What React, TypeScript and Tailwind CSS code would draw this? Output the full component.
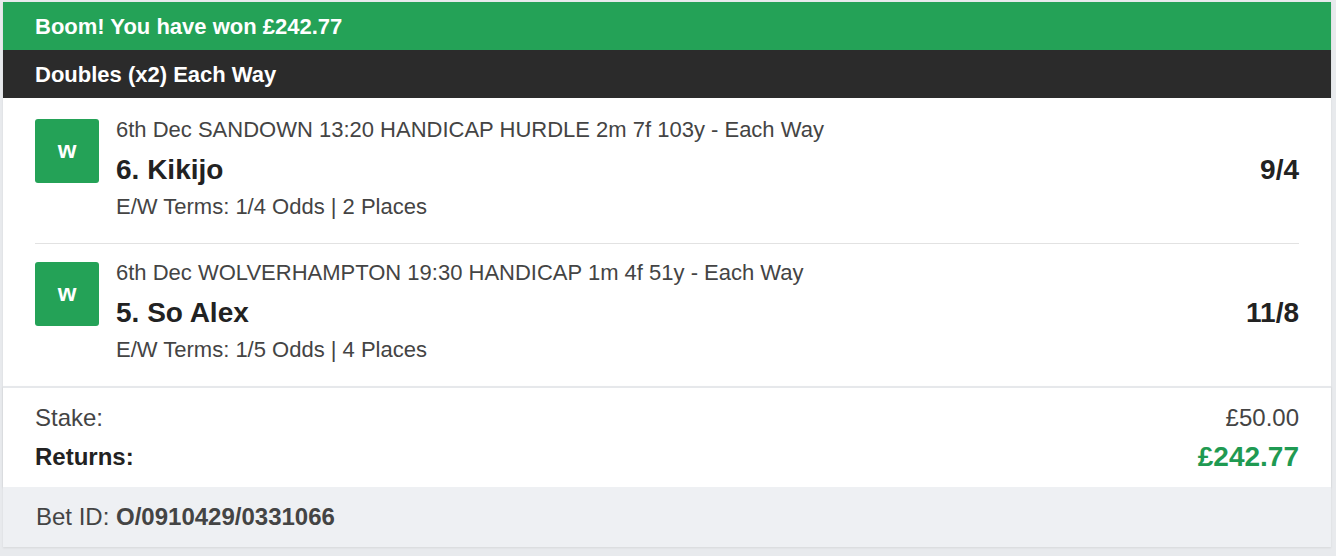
export default function App() {
  const legs = [
    {
      desc: "6th Dec SANDOWN 13:20 HANDICAP HURDLE 2m 7f 103y - Each Way",
      name: "6. Kikijo",
      terms: "E/W Terms: 1/4 Odds | 2 Places",
      odds: "9/4",
    },
    {
      desc: "6th Dec WOLVERHAMPTON 19:30 HANDICAP 1m 4f 51y - Each Way",
      name: "5. So Alex",
      terms: "E/W Terms: 1/5 Odds | 4 Places",
      odds: "11/8",
    },
  ];

  return (
    <div className="min-h-[556px] bg-[#e8eaed] pl-[3px] pr-[5px] pt-[2px] pb-[8px] font-['Liberation_Sans',Arial,sans-serif]">
      <div className="bg-white shadow-[0_1px_2px_rgba(0,0,0,0.08)]">
        <div className="flex h-[48px] items-center bg-[#24a257] px-[32px] text-[22px] font-bold text-white">
          Boom! You have won £242.77
        </div>
        <div className="flex h-[48px] items-center bg-[#2b2b2b] px-[32px] text-[22px] font-bold text-white">
          Doubles (x2) Each Way
        </div>

        <div className="px-[32px]">
          {legs.map((leg, i) => (
            <div
              key={leg.name}
              className={
                i === 0
                  ? "flex border-b border-[#e2e2e2] pt-[21px] pb-[24px]"
                  : "flex pt-[18px] pb-[24px]"
              }
            >
              <div className="flex h-[64px] w-[64px] shrink-0 items-center justify-center rounded-[3px] bg-[#24a257] pb-[2px] text-[24px] font-bold text-white">
                w
              </div>
              <div className="ml-[17px] flex-1">
                <div className="text-[22px] leading-[22px] text-[#444]">{leg.desc}</div>
                <div className="mt-[14px] flex items-center justify-between">
                  <span className="text-[28px] font-bold leading-[30px] text-[#222]">{leg.name}</span>
                  <span className="text-[28px] font-bold leading-[30px] text-[#222]">{leg.odds}</span>
                </div>
                <div className="mt-[10px] text-[22px] leading-[24px] text-[#444]">{leg.terms}</div>
              </div>
            </div>
          ))}
        </div>

        <div className="border-t-2 border-[#e6e8eb] px-[32px] pt-[17px] pb-[16px] shadow-[0_1px_2px_rgba(0,0,0,0.1)]">
          <div className="flex items-center justify-between text-[24px] leading-[26px] text-[#444]">
            <span>Stake:</span>
            <span>£50.00</span>
          </div>
          <div className="mt-[12px] flex items-center justify-between">
            <span className="text-[24px] font-bold leading-[28px] text-[#222]">Returns:</span>
            <span className="text-[28px] font-bold leading-[28px] text-[#1f9a52]">£242.77</span>
          </div>
        </div>

        <div className="flex h-[60px] items-center bg-[#eef0f3] px-[33px] text-[24px] text-[#444]">
          <span>Bet ID:&nbsp;</span>
          <span className="font-bold">O/0910429/0331066</span>
        </div>
      </div>
    </div>
  );
}
